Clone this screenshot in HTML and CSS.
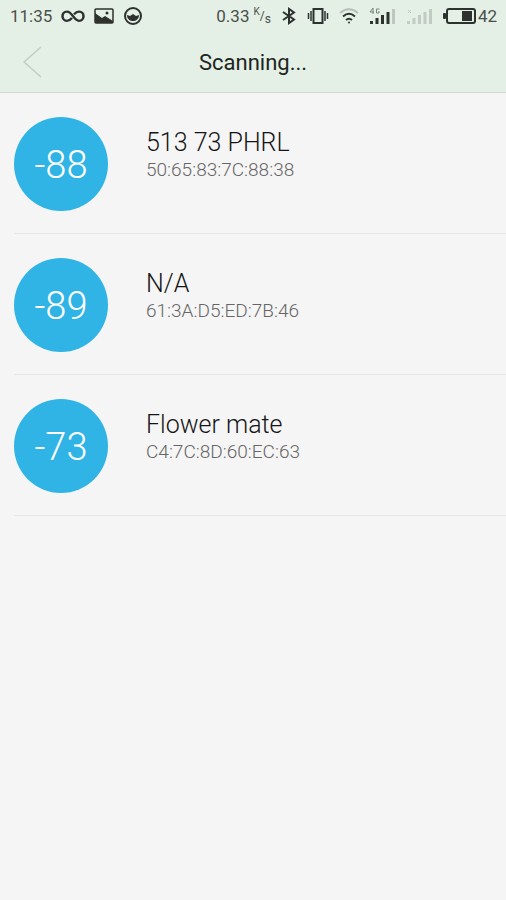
FILE: index.html
```html
<!DOCTYPE html>
<html lang="en">
<head>
<meta charset="utf-8">
<meta name="viewport" content="width=device-width, initial-scale=1">
<title>Scanning...</title>
<link rel="stylesheet" href="styles.css">
</head>
<body>
<header class="top">
  <div class="status">
    <div class="status-group status-left">
      <span>11:35</span>
      <svg width="24" height="20" viewBox="0 0 24 20" fill="none" stroke="#2d322e" stroke-width="2.500"><path d="M13 8C15 5.500 16.500 5 18 5C21 5 22.500 7.500 22.500 10S21 15 18 15C12.500 15 11.500 5 6 5C3 5 1.500 7.500 1.500 10S3 15 6 15C7.500 15 9 14.500 11 12" transform="translate(0 1) scale(1 .92)"/></svg>
      <svg width="20" height="20" viewBox="0 0 20 20"><rect x="1" y="3" width="18" height="14" rx="1" fill="none" stroke="#2d322e" stroke-width="1.500"/><path d="M1 7L8 12L11 10L19 15V17H1Z" fill="#2d322e"/><circle cx="13" cy="7" r="1.500" fill="#2d322e"/></svg>
      <svg width="20" height="20" viewBox="0 0 20 20"><circle cx="10" cy="10" r="8" fill="none" stroke="#2d322e" stroke-width="2"/><path d="M4 9L7 10L10 8L13 10L16 9C16 13 13 15 10 15S4 13 4 9Z" fill="#2d322e"/></svg>
    </div>
    <div class="status-group status-right">
      <span class="speed">0.33 <span class="unit"><sup>K</sup>/<sub>s</sub></span></span>
      <svg width="16" height="20" viewBox="0 0 16 20" fill="none" stroke="#2d322e" stroke-width="2"><path d="M2 6L13 13.500L8 17V3L13 6.500L2 14"/></svg>
      <svg width="22" height="20" viewBox="0 0 22 20" fill="none" stroke="#2d322e" stroke-width="1.500"><rect x="6.500" y="3" width="9" height="14" stroke-width="2"/><path d="M4 5V15M18 5V15M1.500 7V13M20.500 7V13"/></svg>
      <svg width="20" height="20" viewBox="0 0 20 20" fill="none" stroke="#2d322e" stroke-width="2"><path d="M1 7Q10-.5 19 7" stroke="#b5beb7"/><path d="M4 10.500Q10 5 16 10.500M7 14Q10 11.500 13 14"/><circle cx="10" cy="16.500" r="1" fill="#2d322e" stroke="none"/></svg>
      <svg width="27" height="20" viewBox="0 0 27 20" fill="none" stroke="#2d322e" stroke-width="3"><path d="M2.500 15V18M8 12V18M13.500 9V18M19 6V18"/><path d="M24.500 3V18" stroke="#bdc6bf"/><path d="M4 2L1 6H5M4 2V8M10.500 3H7.500V7H10V5" stroke="#7d847e" stroke-width="1"/></svg>
      <svg width="27" height="20" viewBox="0 0 27 20" fill="none" stroke="#c1cac3" stroke-width="3"><path d="M2.500 15V18M8 12V18M13.500 9V18M19 6V18M24.500 3V18"/><path d="M2 4L5 7M5 4L2 7" stroke-width="1"/></svg>
      <span class="battery">
        <svg width="33" height="20" viewBox="0 0 33 20"><rect x="4" y="3" width="28" height="14" rx="2" fill="none" stroke="#2d322e" stroke-width="2"/><rect x="0" y="7" width="3" height="6" rx="1" fill="#2d322e"/><rect x="19" y="5" width="10" height="10" fill="#2d322e"/></svg>
        <span>42</span>
      </span>
    </div>
  </div>
  <div class="bar">
    <button class="back" type="button" aria-label="Back"><svg width="20" height="32" viewBox="0 0 20 32" fill="none" stroke="#c3cbc4" stroke-width="1.500"><path d="M18 1L1 16L18 31"/></svg></button>
    <h1 class="title">Scanning...</h1>
  </div>
</header>
<main>
  <ul class="devices">
    <li class="device">
      <span class="rssi">-88</span>
      <div class="info"><h2 class="name">513 73 PHRL</h2><p class="address">50:65:83:7C:88:38</p></div>
    </li>
    <li class="device">
      <span class="rssi">-89</span>
      <div class="info"><h2 class="name">N/A</h2><p class="address">61:3A:D5:ED:7B:46</p></div>
    </li>
    <li class="device">
      <span class="rssi">-73</span>
      <div class="info"><h2 class="name">Flower mate</h2><p class="address">C4:7C:8D:60:EC:63</p></div>
    </li>
  </ul>
</main>
</body>
</html>
```
FILE: styles.css
```css
* {
  box-sizing: border-box;
}

body {
  margin: 0;
  min-height: 100vh;
  background: #f5f5f5;
  color: #151515;
  font-family: Roboto, "Liberation Sans", sans-serif;
  font-weight: 300;
}

svg {
  display: block;
  flex: none;
}

.top {
  background: #e4efe6;
  border-bottom: 1px solid #d3d8d4;
}

.status {
  display: flex;
  justify-content: space-between;
  height: 32px;
  padding: 0 9px 0 10px;
  color: #4a504b;
  font-size: 17px;
  font-weight: 400;
  line-height: 32px;
  white-space: nowrap;
}

.status-group {
  display: flex;
  align-items: center;
}

.status-left {
  gap: 9px;
}

.status-right {
  gap: 10px;
}

.speed {
  display: flex;
  gap: 4px;
}

.unit {
  font-size: 12px;
}

.unit sup,
.unit sub {
  font-size: 12px;
  line-height: 0;
}

.unit sup {
  font-size: 10px;
}

.battery {
  display: flex;
  align-items: center;
  gap: 2px;
}

.bar {
  display: grid;
  grid-template-columns: 64px 1fr 64px;
  align-items: center;
  height: 60px;
}

.back {
  display: flex;
  align-items: center;
  height: 60px;
  padding: 0 0 0 23px;
  border: 0;
  background: none;
}

.title {
  margin: 0;
  color: #202420;
  font-size: 22px;
  font-weight: 400;
  line-height: 32px;
  padding-top: 2px;
  text-align: center;
}

.devices {
  margin: 0;
  padding: 0 0 0 14px;
  list-style: none;
}

.device {
  display: flex;
  gap: 38px;
  padding: 24px 0 22px;
  border-bottom: 1px solid #e6e6e6;
}

.rssi {
  flex: none;
  width: 94px;
  height: 94px;
  border-radius: 50%;
  background: #2fb4e5;
  color: #fff;
  font-size: 38px;
  line-height: 96px;
  text-align: center;
}

.info {
  padding-top: 10px;
}

.name {
  margin: 0;
  font-size: 25px;
  font-weight: 300;
  line-height: 32px;
}

.address {
  margin: 0;
  color: #666;
  font-size: 19px;
  line-height: 22px;
}
```
